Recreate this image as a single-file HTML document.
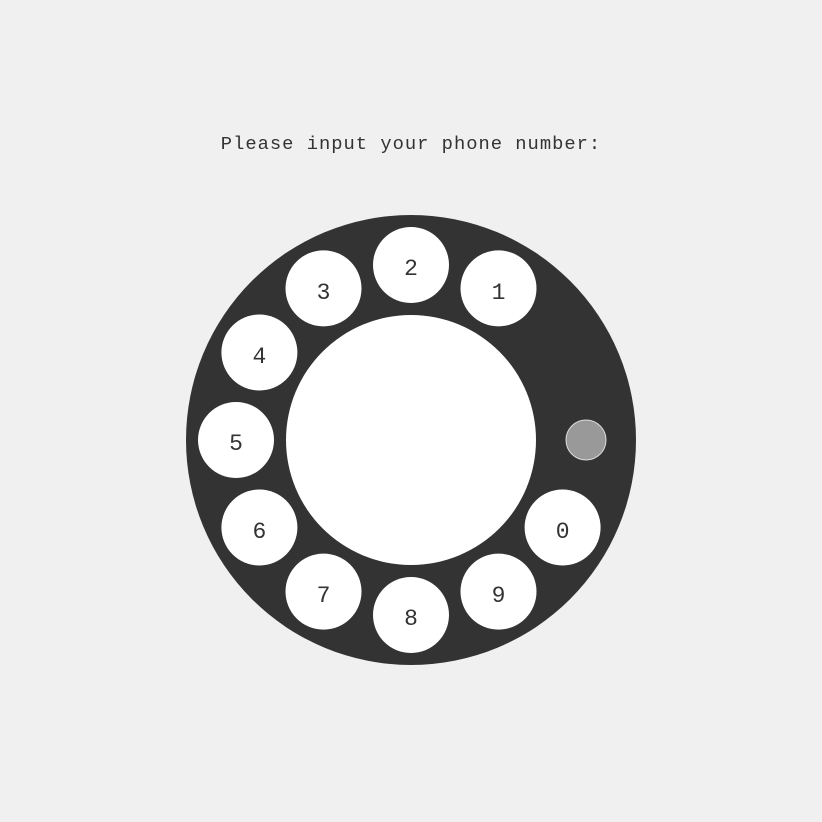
<!DOCTYPE html>
<html><head><style>
html,body{margin:0;padding:0;background:#f0f0f0;width:822px;height:822px;overflow:hidden}
.t{position:absolute;left:0;width:822px;top:133px;text-align:center;font:18.8px "Liberation Mono",monospace;letter-spacing:1px;color:#333}
</style></head><body>
<div class="t">Please input your phone number:</div>
<svg width="822" height="822" style="position:absolute;left:0;top:0">
<circle cx="411" cy="440" r="225" fill="#333"/>
<circle cx="411" cy="440" r="125" fill="#fff"/>
<circle cx="586" cy="440" r="20" fill="#999" stroke="#ddd" stroke-width="1"/>
<g fill="#fff">
<circle cx="411" cy="265" r="38"/>
<circle cx="498.5" cy="288.4" r="38"/>
<circle cx="323.5" cy="288.4" r="38"/>
<circle cx="259.4" cy="352.5" r="38"/>
<circle cx="236" cy="440" r="38"/>
<circle cx="259.4" cy="527.5" r="38"/>
<circle cx="323.5" cy="591.6" r="38"/>
<circle cx="411" cy="615" r="38"/>
<circle cx="498.5" cy="591.6" r="38"/>
<circle cx="562.6" cy="527.5" r="38"/>
</g>
<g fill="#333" font-family="Liberation Mono, monospace" font-size="23" text-anchor="middle" dominant-baseline="central">
<text x="411" y="269">2</text>
<text x="498.5" y="293">1</text>
<text x="323.5" y="293">3</text>
<text x="259.4" y="357">4</text>
<text x="236" y="444">5</text>
<text x="259.4" y="532">6</text>
<text x="323.5" y="596">7</text>
<text x="411" y="619">8</text>
<text x="498.5" y="596">9</text>
<text x="562.6" y="532">0</text>
</g>
</svg>
</body></html>
